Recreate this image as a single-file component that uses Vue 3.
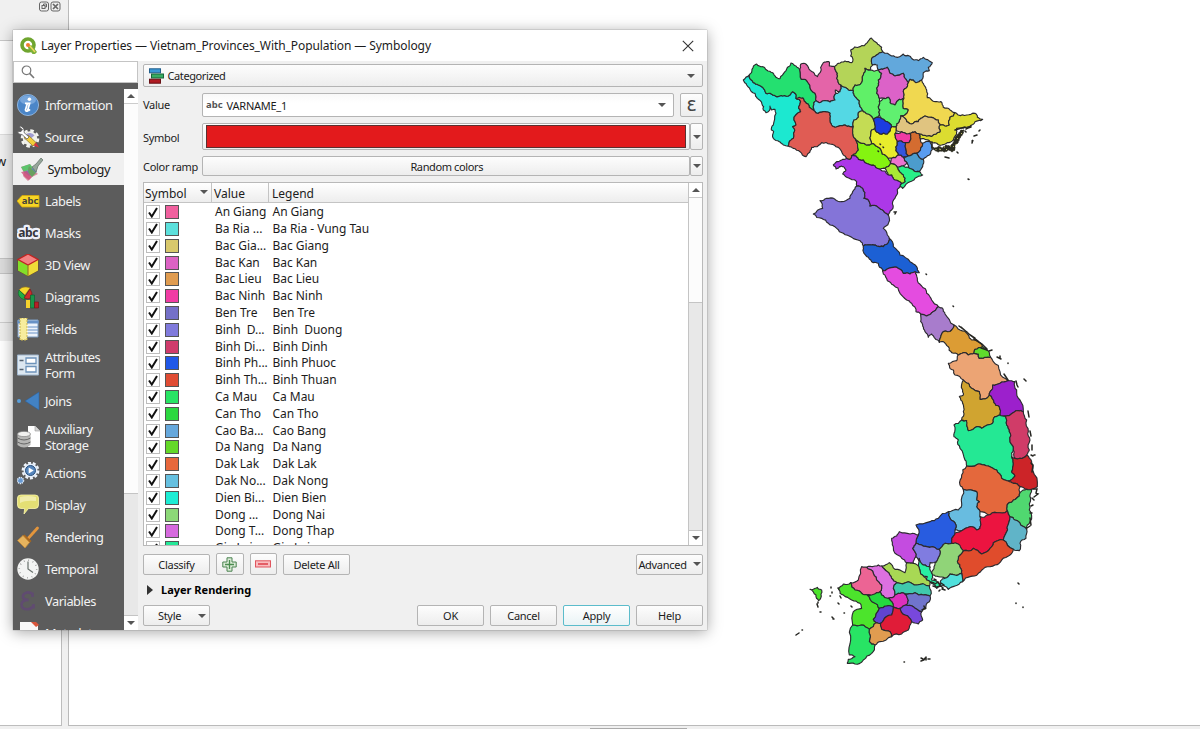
<script setup>
const icons = {
  info: '<circle cx="11" cy="11" r="10.6" fill="#4b86c8" stroke="#9cc0e8" stroke-width=".8"/><ellipse cx="11" cy="6" rx="8" ry="4.6" fill="#8ab4e2" opacity=".7"/><circle cx="12.4" cy="5.2" r="1.8" fill="#fff"/><path d="M8 9.4h4.6l-2 7.2q1 .3 2.4-1.2M8 9.4h2.4l-1.9 6.4q.1 1.7 2.2 1.3" fill="none" stroke="#fff" stroke-width="1.8"/>',
  source: '<circle cx="13" cy="12.500" r="8" fill="none" stroke="#f4f4f0" stroke-width="2.600" stroke-dasharray="3.600 2.683"/><circle cx="13" cy="12.500" r="7.200" fill="#f0f0ea"/><path d="M8.500 8.500a6 6 0 0 1 9 1l-5 4-5 0q-1-2 1-5" fill="#a09cd2"/><path d="M7 11.500l4-2.500 8 7.500-3 3.500z" fill="#f4cf3a" stroke="#8f7a2c" stroke-width=".8"/><path d="M19 16.500l3 5-5.500-2z" fill="#d9333c"/><path d="M.5 5.500q1 3.500 4.500 3L10 13l2-2-5-4.500Q8 2 3.500 0l-1 1L5.500 3.500 4 5.500z" fill="#fff" stroke="#555" stroke-width=".7"/>',
  symbology: '<path d="M1 9l9-3 3 5 5 5-6 3-4 4L3 18l1-3z" fill="#d98ca0"/><path d="M1 9l9-3 3 4-9 4z" fill="#5cc46c"/><path d="M4 14l9-4 4 4-8 4z" fill="#5a86c8"/><path d="M1 14l4 5 4 3 3-3-5-6z" fill="#d0507a" opacity=".8"/><path d="M9 8l7 7-4 4q-6-5-3-11" fill="#68a060"/><path d="M12 9l4-3 5-6 2 2-5 6-2 6z" fill="#96a69a" stroke="#68776f" stroke-width=".8"/>',
  labels: '<path d="M0 11l5-5.500h17v11.500H5z" fill="#f7d525" stroke="#d6a80a" stroke-width=".8"/><text x="13" y="14.300" text-anchor="middle" font-size="9.500" font-weight="700" font-family="Noto Sans,sans-serif" letter-spacing="0" fill="#44443c">abc</text>',
  masks: '<text x="11.200" y="14.800" text-anchor="middle" font-size="12" font-weight="700" font-family="Noto Sans,sans-serif" letter-spacing="-.3" fill="#35353d" stroke="#eef0fa" stroke-width="4.600" stroke-linejoin="round" style="paint-order:stroke">abc</text>',
  cube: '<path d="M11 0l10 5.500v11L11 22 1 16.500v-11z" fill="#f4e02c" stroke="#704818" stroke-width=".8"/><path d="M1 5.500L11 11v11L1 16.500z" fill="#82df2a"/><path d="M11 11l10-5.500v11L11 22z" fill="#efdc38"/><path d="M11 0l10 5.500L11 11 1 5.500z" fill="#f48282" stroke="#c02424" stroke-width="1.300"/><path d="M11 11v11" stroke="#937c24" stroke-width="1.200"/>',
  diagrams: '<path d="M8 9L2 4Q6-1 13 2z" fill="#f6d72c" stroke="#a37b12" stroke-width=".6"/><path d="M8 10L2 4q-3 7 6 10z" fill="#22ad43" stroke="#0b6628" stroke-width=".6"/><path d="M7 12l6-9q5 8-2 10z" fill="#ce2b2d" stroke="#701313" stroke-width=".6"/><path d="M9 14h4.500v8H9z" fill="#f6d22e"/><path d="M13.500 9h4v13h-4z" fill="#18964a" stroke="#0b572c" stroke-width=".6"/><path d="M17.500 16h4v6h-4z" fill="#b51f27" stroke="#701313" stroke-width=".6"/>',
  fields: '<path d="M1 2h20v17H1z" fill="#eef4fc" stroke="#7c9cc0"/><path d="M1 3h20v2H1zM11 9h10M11 12h10M11 15h10" fill="#6992c6" stroke="#6992c6" stroke-width="1.200"/><path d="M3 0h7v22H3z" fill="#f7ed9d" stroke="#c7b34c" stroke-dasharray="2 1"/>',
  form: '<path d="M.5 1h21v20H.5z" fill="#dce7f1" stroke="#9fb5cc"/><path d="M2.500 6.500h4M2.500 15.500h4" stroke="#536270" stroke-width="1.400"/><path d="M9 4h10v5.500H9zM9 12.500h10V18H9z" fill="#fff" stroke="#6d93ba" stroke-width="1.300"/>',
  joins: '<path d="M8 11L22 2v18z" fill="#4282c4" stroke="#285f9c" stroke-width=".5"/><circle cx="2" cy="11" r="2" fill="#5aa0dc"/>',
  storage: '<path d="M11 0h7l5 5v16H11z" fill="#fff"/><path d="M18 0v5h5" fill="#d4d4d4" stroke="#999" stroke-width=".6"/><path d="M.5 8v11q6.500 5 13 0V8z" fill="#b6b6b4"/><path d="M.5 12q6.500 4 13 0M.5 16q6.500 4 13 0" fill="none" stroke="#666" stroke-width="1"/><ellipse cx="7" cy="8" rx="6.500" ry="2.600" fill="#f1f1ef" stroke="#888" stroke-width=".7"/>',
  actions: '<circle cx="13.500" cy="8.500" r="7.700" fill="none" stroke="#eef3fa" stroke-width="2.400" stroke-dasharray="3 1.800"/><circle cx="13.500" cy="8.500" r="7" fill="#e5eef9"/><circle cx="13.500" cy="8.500" r="5" fill="#5686bd" stroke="#294e7b"/><path d="M11.700 5.500l5 3-5 3z" fill="#fff"/><circle cx="3.500" cy="18.500" r="3" fill="#6799d2" stroke="#dce9f7" stroke-width="1.500" stroke-dasharray="1.300 .7"/>',
  display: '<path d="M4 1h14q3.500 0 3.500 3v7q0 3.500-3.500 3.500h-6.500L7 20l.7-5.500H4Q.5 14.500.5 11V4Q.5 1 4 1z" fill="#e4df74" stroke="#fdf8ad" stroke-width=".8"/><path d="M3 3q8-2 16 0v4Q8 6 3 9z" fill="#f1edac"/>',
  rendering: '<path d="M20.500 2l-9 10" stroke="#e3953c" stroke-width="2.800" stroke-linecap="round"/><path d="M7.500 8.500l7 6.500-2 2-7-7z" fill="#a8671f"/><path d="M6 9.500l6.500 7L8 22 .5 14.500z" fill="#e6b35e" stroke="#c68933" stroke-width=".7"/>',
  clock: '<circle cx="11" cy="11" r="10.700" fill="#f3f4f3"/><circle cx="11" cy="11" r="8.700" fill="none" stroke="#999" stroke-width="1.500" stroke-dasharray=".8 3.755"/><path d="M11 3.500V11l5 3.500" fill="none" stroke="#68706c" stroke-width="1.200"/>',
  epsilon: '<path d="M16 4.500Q14 2 10 2.500 4.500 4.300 6.200 8q1.500 2 5.500 2Q5 10 4.500 14.200q-.2 5 6 5Q15 19 16.500 15M15.500 2.500v4.500M16.500 14v4.500" fill="none" stroke="#604b71" stroke-width="2.600"/>',
  metadata: '<path d="M3 0h15l3 3v18H3z" fill="#f8f8f8"/><path d="M14 0l5 5 3-2-3-3z" fill="#d9553b"/>'
}

const nav = [
  { label: 'Information', icon: 'info' },
  { label: 'Source', icon: 'source' },
  { label: 'Symbology', icon: 'symbology', active: true },
  { label: 'Labels', icon: 'labels' },
  { label: 'Masks', icon: 'masks' },
  { label: '3D View', icon: 'cube' },
  { label: 'Diagrams', icon: 'diagrams' },
  { label: 'Fields', icon: 'fields' },
  { label: 'Attributes Form', icon: 'form', tall: true },
  { label: 'Joins', icon: 'joins' },
  { label: 'Auxiliary Storage', icon: 'storage', tall: true },
  { label: 'Actions', icon: 'actions' },
  { label: 'Display', icon: 'display' },
  { label: 'Rendering', icon: 'rendering' },
  { label: 'Temporal', icon: 'clock' },
  { label: 'Variables', icon: 'epsilon' },
  { label: 'Metadata', icon: 'metadata' }
]

const rows = [
  ['#f0609e', 'An Giang', 'An Giang'],
  ['#5ce0dc', 'Ba Ria ...', 'Ba Ria - Vung Tau'],
  ['#d8c86c', 'Bac Gia...', 'Bac Giang'],
  ['#dc62c4', 'Bac Kan', 'Bac Kan'],
  ['#e09c50', 'Bac Lieu', 'Bac Lieu'],
  ['#f03ca4', 'Bac Ninh', 'Bac Ninh'],
  ['#7470c8', 'Ben Tre', 'Ben Tre'],
  ['#807adc', 'Binh  D...', 'Binh  Duong'],
  ['#d03c6c', 'Binh Di...', 'Binh Dinh'],
  ['#2058e8', 'Binh Ph...', 'Binh Phuoc'],
  ['#e04c34', 'Binh Th...', 'Binh Thuan'],
  ['#28e464', 'Ca Mau', 'Ca Mau'],
  ['#2cd840', 'Can Tho', 'Can Tho'],
  ['#66a8dc', 'Cao Ba...', 'Cao Bang'],
  ['#64d828', 'Da Nang', 'Da Nang'],
  ['#e8683c', 'Dak Lak', 'Dak Lak'],
  ['#66c0e0', 'Dak No...', 'Dak Nong'],
  ['#1cecd4', 'Dien Bi...', 'Dien Bien'],
  ['#8cd878', 'Dong ...', 'Dong Nai'],
  ['#d66ade', 'Dong T...', 'Dong Thap'],
  ['#24e898', 'Gia Lai', 'Gia Lai']
]

// Each sheet holds its own origin; province outlines are stored at three units per pixel.
const sheets = [
  { x: 730, y: 30, areas: [
    ['#1ce8d0', '40,150 58,135 70,158 85,165 98,172 108,190 125,193 140,200 158,198 180,195 188,185 197,192 198,205 212,215 206,235 212,245 192,270 198,285 188,290 193,305 190,325 178,335 175,348 160,345 148,335 130,325 131,305 124,300 130,285 138,250 135,238 124,240 120,228 118,242 108,248 100,240 96,222 82,205 75,190 60,178 50,165'],
    ['#24e070', '58,135 66,118 80,102 98,110 110,120 128,128 138,142 150,146 165,125 175,110 183,99 198,108 210,122 214,148 230,152 240,172 255,190 258,212 250,228 252,242 238,232 225,215 206,204 198,192 188,185 180,195 158,198 140,200 125,193 108,190 98,172 85,165 70,158'],
    ['#e464a8', '210,122 212,103 222,100 235,112 250,127 262,140 272,112 280,98 297,95 298,108 314,110 322,130 320,145 332,165 330,185 316,180 312,200 315,210 300,216 285,212 268,218 255,212 258,200 252,188 235,165 232,152 216,148'],
    ['#b4d458', '314,110 325,100 345,93 365,98 368,85 362,78 362,60 390,50 412,38 424,24 440,38 455,52 458,65 445,72 425,85 428,105 420,120 405,115 400,135 395,158 385,165 375,165 370,182 350,175 335,172 332,165 320,145 322,130'],
    ['#54d8e4', '255,212 268,218 285,212 300,216 315,210 318,190 330,185 335,172 350,175 355,180 370,182 372,195 388,212 390,230 398,242 385,248 385,262 372,270 370,290 360,290 345,285 330,287 315,292 305,285 300,268 300,250 285,245 265,250 252,243 250,228'],
    ['#e05c54', '206,204 218,204 225,215 238,232 265,250 285,245 300,250 300,268 305,285 315,292 330,287 345,285 360,290 370,292 368,310 375,325 385,360 378,378 365,378 360,388 340,375 325,352 300,342 275,338 262,350 245,352 235,370 228,380 210,365 190,355 170,350 178,335 190,325 193,305 188,290 198,285 192,270 212,245 206,235 212,215'],
    ['#60f068', '370,182 375,165 385,165 395,158 400,135 405,115 420,120 445,120 455,130 445,150 446,165 440,190 448,205 445,230 450,240 442,262 430,268 412,252 398,242 390,230 388,212 372,195'],
    ['#84f410', '372,328 395,340 410,345 425,340 435,345 450,355 457,372 475,385 482,400 465,415 450,418 435,408 415,402 400,390 382,385 370,378 382,358'],
    ['#c4dc54', '370,290 372,270 385,262 385,248 398,242 412,252 430,268 435,285 425,300 422,315 425,335 410,345 395,340 378,332 368,318']
  ] },
  { x: 860, y: 30, areas: [
    ['#62a8dc', '32,90 48,68 70,63 95,78 105,80 130,72 148,78 158,88 175,92 190,82 207,92 217,98 205,112 208,122 190,128 185,150 168,158 160,150 145,158 138,148 130,130 105,138 90,130 82,112 68,118 55,122 52,105 40,98'],
    ['#dc62c8', '55,122 68,118 82,112 88,130 105,138 130,130 132,145 145,150 142,170 130,185 132,205 118,208 105,225 90,218 85,202 72,205 55,190 50,175 58,165 56,150 66,135'],
    ['#60f070', '58,215 72,205 85,202 90,218 105,225 118,208 128,205 130,235 145,240 138,252 122,258 118,275 108,290 95,290 82,275 70,268 58,255 62,235'],
    ['#f0d850', '130,205 132,185 142,170 145,158 150,148 160,152 168,160 188,150 192,165 200,180 202,203 215,210 230,215 243,215 250,232 270,240 285,248 280,258 270,262 268,285 255,288 240,285 235,270 215,262 195,258 182,265 175,275 155,282 140,272 128,262 138,252 145,240 130,235'],
    ['#dcdc30', '180,325 178,312 200,318 228,312 240,305 240,285 268,285 270,262 285,252 295,255 320,255 345,250 352,262 368,268 355,272 345,275 330,290 318,292 290,295 290,312 280,330 262,338 245,345 225,338 210,335 195,328'],
    ['#e0c480', '108,300 105,290 118,275 122,258 135,265 140,275 155,282 175,275 182,265 195,258 215,262 235,270 242,288 240,305 228,312 200,318 178,312 165,305 150,310 140,312 125,305'],
    ['#e8ec2c', '35,305 45,295 60,312 82,312 90,288 100,292 106,310 112,335 108,350 115,375 95,385 82,385 70,368 55,355 50,338 32,330'],
    ['#1c3ce0', '38,268 55,265 70,268 82,275 90,292 82,312 65,312 50,295 45,280'],
    ['#f03aa4', '108,310 125,305 140,312 152,316 150,332 135,338 115,332 106,322'],
    ['#d46c30', '150,332 152,315 165,305 175,312 180,325 188,340 182,355 170,370 155,375 138,370 135,350 145,338'],
    ['#3454dc', '106,345 115,335 132,338 138,352 135,370 145,378 130,382 112,378 108,362'],
    ['#5a9cf0', '182,355 188,340 205,332 215,345 212,370 200,380 190,388 175,378 170,370'],
    ['#4c9ccc', '138,385 155,375 175,378 190,388 188,410 178,425 160,420 145,412 142,400'],
    ['#ec74d0', '92,388 110,378 130,382 138,395 130,408 112,412 100,402'],
    ['#28f088', '112,412 130,405 145,412 160,422 185,425 188,435 165,445 150,455 128,475 125,460 135,455 130,435 118,425'],
    ['#a8e834', '76,422 90,408 112,415 130,435 135,455 125,460 105,450 95,435']
  ] },
  { x: 800, y: 150, areas: [
    ['#8474d8', '40,192 68,175 60,152 80,145 105,148 125,155 150,145 158,125 170,108 188,115 195,128 192,145 205,150 210,168 235,172 250,182 265,195 268,205 258,228 250,235 262,255 268,265 262,282 240,290 215,285 200,285 180,272 155,262 130,250 110,235 85,220 65,205'],
    ['#ac38e8', '100,45 110,35 125,30 140,25 160,20 175,28 200,40 225,55 245,60 265,75 290,90 305,98 300,110 292,118 290,135 278,155 275,180 272,195 262,192 250,182 235,172 210,165 205,150 192,145 195,125 180,112 165,105 170,95 140,82 128,72 138,60 130,50 118,50 108,57'],
    ['#1c60d4', '190,288 200,283 230,288 250,290 262,282 268,268 280,290 300,315 330,335 350,350 358,368 345,365 330,372 310,370 300,358 280,352 255,362 248,360 235,340 220,338 205,322 190,305'],
    ['#e44ce0', '250,372 262,362 285,352 300,362 310,372 330,372 350,368 352,385 365,408 380,430 395,450 415,470 395,488 380,498 362,492 348,485 335,460 320,450 300,430 280,405 262,392'],
    ['#a87ccc', '362,495 380,498 398,488 412,472 428,475 435,492 462,525 455,540 430,545 422,562 418,577 405,565 395,552 385,562 375,545 368,528 362,515']
  ] },
  { x: 900, y: 300, areas: [
    ['#dc9c34', '125,100 155,95 162,75 180,90 205,105 215,120 240,128 248,140 225,148 222,160 205,165 190,158 175,165 155,158 145,140 130,125 120,125'],
    ['#eca474', '145,190 170,182 175,165 190,160 205,165 222,160 238,175 272,172 280,185 300,215 325,242 300,250 278,255 275,270 268,285 260,295 240,298 238,275 215,265 205,250 190,240 165,225 160,210 150,205'],
    ['#60dc2c', '222,155 230,142 245,145 258,145 268,158 272,170 260,172 238,175 235,162'],
    ['#d0a430', '178,290 190,285 188,270 190,242 205,250 215,265 238,275 240,298 260,295 270,290 282,308 298,320 300,345 285,350 280,365 262,375 245,385 230,380 205,392 200,375 185,360 190,335 188,310'],
    ['#9c20cc', '278,255 300,250 325,243 345,245 350,270 360,300 370,335 355,332 330,345 315,348 300,345 298,320 285,305 270,288'],
    ['#24e894', '162,375 185,362 200,362 205,392 230,380 245,385 262,375 280,365 285,350 315,348 320,375 328,395 330,420 340,440 335,470 340,490 335,515 345,528 325,543 305,535 290,510 265,498 240,492 200,498 195,480 180,445 175,420 162,410 165,390'],
    ['#d03c68', '316,350 335,343 355,333 370,337 380,360 385,395 390,420 388,450 380,465 360,475 345,475 340,450 332,420 325,390'],
    ['#cc2428', '330,475 345,475 360,475 388,462 395,485 398,510 412,560 395,568 360,560 330,545 345,528 335,515 340,490']
  ] },
  { x: 880, y: 460, areas: [
    ['#e4683c', '240,75 245,45 262,20 290,14 330,18 350,32 362,52 380,62 400,70 418,88 418,108 400,120 385,130 382,152 350,158 325,165 300,155 290,140 298,125 290,120 290,95 250,88'],
    ['#50d870', '385,132 400,120 418,108 420,98 440,88 462,85 452,115 448,150 450,185 440,208 422,195 405,180 390,170 385,150'],
    ['#68bce0', '205,155 235,150 245,130 248,92 290,95 290,120 298,125 290,140 305,158 310,180 300,205 270,200 245,212 225,210 228,195 210,175'],
    ['#285ce0', '108,195 150,185 175,175 205,155 210,175 228,200 225,220 215,235 215,250 195,250 178,268 150,262 125,255 108,250 115,225'],
    ['#ec1440', '215,230 240,215 265,200 290,210 305,205 302,190 300,170 330,165 382,152 385,170 382,200 380,215 370,240 340,248 330,265 305,282 280,265 250,272 232,262 212,250'],
    ['#60b4c8', '385,165 405,182 422,198 445,212 438,235 420,250 418,272 400,268 370,240 382,215'],
    ['#e04c2c', '245,270 280,265 305,282 330,265 340,248 372,245 400,268 390,285 365,300 345,315 315,322 295,340 270,350 248,365 245,340 232,305 235,290'],
    ['#90d478', '180,275 195,255 215,247 235,252 245,275 232,295 242,325 245,340 225,345 210,342 195,355 175,350 155,340 162,320 172,300'],
    ['#50e0dc', '182,362 195,350 210,342 225,345 242,338 245,362 225,378 205,388 180,375'],
    ['#c44ce0', '35,235 50,228 58,215 90,222 110,230 108,250 98,265 108,290 100,310 80,308 65,295 45,280 40,260'],
    ['#807ce0', '98,262 110,250 130,255 150,262 172,270 168,295 150,308 150,322 130,315 115,298'],
    ['#28f0a4', '108,300 118,295 130,315 145,322 150,335 158,345 155,360 180,375 170,385 160,372 150,365 142,350 122,342 118,325']
  ] },
  { x: 780, y: 530, areas: [
    ['#a8d854', '305,108 328,98 345,118 375,128 380,105 405,105 415,120 420,140 440,150 448,168 430,175 410,165 385,155 350,158 335,145 322,125'],
    ['#dc70e0', '260,112 285,108 305,112 322,132 348,158 340,175 345,195 325,205 305,195 305,165 295,155 280,130'],
    ['#ec6494', '212,158 235,150 245,110 258,112 278,130 290,150 305,165 300,185 280,200 262,195 245,190 225,180'],
    ['#40c8ac', '338,180 350,160 385,155 410,165 450,175 450,198 430,195 405,188 375,192 350,195'],
    ['#dc30bc', '325,205 345,195 355,190 375,195 385,212 378,225 360,235 340,230'],
    ['#7074cc', '375,192 405,188 450,200 448,215 435,235 425,245 400,230 385,225 385,212'],
    ['#7848dc', '358,235 375,225 400,225 425,250 428,270 415,282 395,275 375,255'],
    ['#4ce42c', '175,175 190,162 212,165 225,182 245,190 265,198 282,218 298,235 280,268 288,278 268,298 245,285 218,285 220,245 245,235 240,220 215,210 190,195 180,190'],
    ['#24d840', '265,200 290,188 310,200 335,215 340,230 320,228 298,235 280,215'],
    ['#6044d0', '280,270 298,240 320,228 342,235 335,255 310,272 290,278'],
    ['#e01c38', '302,280 335,258 342,235 358,240 375,258 392,280 385,300 365,312 335,320 330,305 305,298'],
    ['#e09c50', '265,295 285,278 300,280 305,298 332,305 335,322 300,335 285,345 268,335 270,315'],
    ['#28e464', '218,285 245,283 268,298 265,330 285,348 275,370 250,390 225,402 202,400 205,388 225,380 208,375 212,330'],
    ['#4ce42c', '90,178 100,178 112,172 125,180 122,205 116,212 108,195']
  ] }
]

const noise = (a, b, c, d) => {
  const v = Math.sin(a * 12.99 + b * 78.23 + c * 37.72 + d * 9.13) * 43758.55
  return v - Math.floor(v) - 0.5
}

// Corners of neighbouring provinces that nearly meet are merged into one shared corner.
const corners = []
const corner = (x, y, taken) => {
  let best = null
  let near = 9
  for (const c of corners) {
    const gap = Math.hypot(c[0] - x, c[1] - y)
    if (gap < near && !taken.has(c)) {
      near = gap
      best = c
    }
  }
  if (!best) {
    best = [x, y]
    corners.push(best)
  }
  taken.add(best)
  return best
}

const areas = sheets.flatMap((s) => s.areas.map(([fill, text]) => {
  const taken = new Set()
  const pts = text.split(' ').map((t) => {
    const [x, y] = t.split(',').map(Number)
    return corner(x + s.x * 3, y + s.y * 3, taken)
  })
  return { fill, pts, taken }
}))

// A neighbour's corner that lies along an edge becomes part of that edge.
const between = (p, q, taken) => {
  const dx = q[0] - p[0]
  const dy = q[1] - p[1]
  const len2 = dx * dx + dy * dy || 1
  return corners
    .filter((c) => !taken.has(c))
    .map((c) => {
      const t = ((c[0] - p[0]) * dx + (c[1] - p[1]) * dy) / len2
      return { c, t, off: Math.hypot(c[0] - p[0] - t * dx, c[1] - p[1] - t * dy) }
    })
    .filter((e) => e.t > 0.05 && e.t < 0.95 && e.off < 8)
    .sort((a, b) => a.t - b.t)
    .map((e) => e.c)
}

// Breaks an edge into a coastline-like line; both directions of an edge give the same line.
const crinkle = (p, q, depth) => {
  const len = Math.hypot(q[0] - p[0], q[1] - p[1])
  if (!depth || len < 6) return [q]
  const flip = p[0] > q[0] || (p[0] === q[0] && p[1] > q[1])
  const [a, b] = flip ? [q, p] : [p, q]
  const k = noise(a[0], a[1], b[0], b[1]) * 0.34
  const m = [
    (a[0] + b[0]) / 2 - (b[1] - a[1]) * k,
    (a[1] + b[1]) / 2 + (b[0] - a[0]) * k
  ]
  return [...crinkle(p, m, depth - 1), ...crinkle(m, q, depth - 1)]
}

const provinces = areas.map(({ fill, pts, taken }) => {
  const ring = pts.flatMap((p, i) => [p, ...between(p, pts[(i + 1) % pts.length], taken)])
  const out = ring.flatMap((p, i) => crinkle(p, ring[(i + 1) % ring.length], 2))
  return { fill, d: 'M' + out.map((p) => p[0].toFixed(1) + ' ' + p[1].toFixed(1)).join('L') + 'Z' }
})

const bay = 'M932 147l4 1 3-2 3 2 4-3 4 1 3-3 2-6 3-3 3-4 3 0-1 4-3 4-2 5-3 2 0 5-3 2-3-2-4 2-4-1-3 1-4-2z'
const bayGaps = 'M939 149l2 .5M946 150l1-1M953 147l1-1M957 139l1-1M961 134l1-1M944 147l1 0M950 146l1 0M956 144l0 1M936 150l0-1'
const islands = 'M955 130l10-3M966 129l5-3M932 142l0 6M957 152l1 1M945 157l4 1M974 136l3-1M972 141l1-1-1 3M979 131l1-1M965 131l1 1M968 128l3-1M968 179l1 .5M894 212l2 0-1 2M931 582l3 1M935 584l3-2 2 3M937 587l4-1 2 2M942 589l3 1M933 586l3 1M941 583l3 2M939 591l1-1M934 579l2 1M959 326l8 6M961 327l8 7 6 4M974 339l8 5 5 5M970 335l8 6M981 348l6 2M989 351l3-1M997 357l4 2M1000 356l0 2M1008 363l0 .5M1024 379l2 2M926 274l.5.5M953 306l.5.5M1004 374l4 6M1016 381l1 4 1 2M1028 411l1 6M1030 431l1 5M1032 445l0 5M1031 455l2 1M1034 455l1 0M1031 463l2 2-1 7M1033 489l4 0-1 4 2 1-4 3M1032 498l2 2M1031 506l2-1M1030 513l2 0M1030 518l1 7M1027 528l3-2M1018 583l1 1M1016 603l0 .5M1023 607l0 .5M817 604l1 3M818 602l0 1M820 612l1 0M831 587v1M832 592v1M830 596h.5M838 588l1 1M840 596l1 2M838 603l1 1M851 606l1 1M844 613h.5M832 617l1 1M833 619l1 0M796 635l3-2M802 630h.5M921 658l2 1M921 661l3-1 1-2M926 657l0 3M928 659l2 0M904 662h.5M922 610l4-2M924 606l1 3M880 144l.5.5M883 147l.5.5M878 151l.5.5'
</script>

<template>
  <div class="desktop">
    <div class="workspace">
      <aside class="dock">
        <div class="dock-head"></div>
        <div class="dock-tree"></div>
        <div class="dock-tool"><span>w</span></div>
        <div class="dock-band"></div>
        <div class="dock-sub"></div>
        <div class="dock-sub2"></div>
        <div class="dock-list"></div>
      </aside>
      <div class="splitter"></div>
      <main class="canvas"></main>
    </div>
    <div class="status"><i></i></div>

    <div class="dock-title">
      <svg width="22" height="11" viewBox="0 0 22 11" fill="none" stroke="#666">
        <rect x=".5" y="1" width="9" height="9" rx="2" /><rect x="3" y="4.500" width="3" height="3" /><path d="M4.500 4.500v-1.500h3v3h-1.500" />
        <rect x="12" y="1" width="9" height="9" rx="2" /><path d="M14 3l5 5M19 3l-5 5" stroke-width="1.700" />
      </svg>
    </div>

    <svg class="map" width="1200" height="729" viewBox="0 0 1200 729">
      <g transform="scale(.33333)">
        <path v-for="(s, j) in provinces" :key="j" :d="s.d" :fill="s.fill" stroke="#2b2a2e" stroke-width="3.400" stroke-linejoin="round" />
      </g>
      <path :d="bay" fill="#2c2c20" stroke="#2c2c20" stroke-width=".8" stroke-dasharray="2 1" />
      <path :d="bayGaps" fill="none" stroke="#c8cc70" stroke-width=".9" />
      <path :d="islands" fill="none" stroke="#262622" stroke-width="1.500" stroke-linecap="round" />
    </svg>

    <section class="dialog">
      <header class="title">
        <svg width="17" height="17" viewBox="0 0 17 17">
          <circle cx="8" cy="8" r="6" fill="none" stroke="#6fa52f" stroke-width="3.600" />
          <path d="M8.500 8l3.500.5 5 6.500-2 2h-2.500L8 11z" fill="#7cb03a" />
          <path d="M9 8l6 7" stroke="#f0d85c" stroke-width="1.500" /><circle cx="8" cy="8" r="2" fill="#ee7b30" />
        </svg>
        <h1>Layer Properties — Vietnam_Provinces_With_Population — Symbology</h1>
        <svg class="close" width="12" height="12" viewBox="0 0 12 12" stroke="#333" stroke-width="1.100"><path d="M.8.8l10.400 10.400M11.200.8L.8 11.200" /></svg>
      </header>

      <div class="body">
        <nav class="side">
          <div class="search">
            <svg width="14" height="14" viewBox="0 0 14 14" fill="none" stroke="#777" stroke-width="1.200"><circle cx="5.500" cy="5.300" r="4.300" /><path d="M8.600 8.400l4.400 4.600" stroke-width="1.600" /></svg>
          </div>
          <div class="side-main">
            <div class="items">
              <div v-for="n in nav" :key="n.label" class="item" :class="{ active: n.active, tall: n.tall }">
                <svg width="23" height="23" viewBox="0 0 23 23" v-html="icons[n.icon]"></svg>
                <span>{{ n.label }}</span>
              </div>
            </div>
            <div class="bar side-bar">
              <div class="cap"><b class="up"></b></div>
              <div class="thumb"></div>
              <div class="track"></div>
              <div class="cap end"><b class="down"></b></div>
            </div>
          </div>
        </nav>

        <div class="panel">
          <div class="box renderer">
            <svg width="15" height="16" viewBox="0 0 15 16" stroke-width="1">
              <rect x=".5" y=".8" width="11" height="4" fill="#3998d4" stroke="#225e8c" /><rect x="2.500" y="6" width="12" height="4" fill="#37ac62" stroke="#18643a" /><rect x=".5" y="11.200" width="11" height="4" fill="#b01b22" stroke="#671115" />
            </svg>
            <span>Categorized</span><b class="down"></b>
          </div>
          <div class="line value-line">
            <label>Value</label>
            <div class="box field"><em>abc</em><span>VARNAME_1</span><b class="down"></b></div>
            <div class="box eps">ε</div>
          </div>
          <div class="line symbol-line">
            <label>Symbol</label>
            <div class="box swatch"><i></i></div><div class="box drop"><b class="down"></b></div>
          </div>
          <div class="line ramp-line">
            <label>Color ramp</label>
            <div class="box ramp">Random colors</div><div class="box drop"><b class="down"></b></div>
          </div>

          <div class="table">
            <div class="grid">
              <div class="thead">
                <span class="c1">Symbol<b class="down"></b></span><span class="c2">Value</span><span class="c3">Legend</span>
              </div>
              <div class="rows">
                <div v-for="r in rows" :key="r[2]" class="row">
                  <span class="check"><svg width="10" height="11" viewBox="0 0 10 11" fill="none" stroke="#111" stroke-width="2"><path d="M1 5.500l2.800 4L9 1" /></svg></span>
                  <i :style="{ background: r[0] }"></i>
                  <span class="val">{{ r[1] }}</span><span class="leg">{{ r[2] }}</span>
                </div>
              </div>
            </div>
            <div class="bar table-bar">
              <div class="cap"><b class="up"></b></div>
              <div class="thumb"></div>
              <div class="track"></div>
              <div class="cap"><b class="down"></b></div>
            </div>
          </div>

          <div class="line tools">
            <button class="wide">Classify</button>
            <button class="mini"><svg width="15" height="15" viewBox="0 0 15 15"><path d="M5 .8h5v4.200h4.200v5H10v4.200H5V10H.8V5H5z" fill="#dcecd8" stroke="#4b8350" /><path d="M7.500 3v9M3 7.500h9" stroke="#4c8c50" stroke-width="1.300" /></svg></button>
            <button class="mini"><svg width="16" height="8" viewBox="0 0 16 8"><rect x=".5" y=".8" width="15" height="6.200" fill="#f9bcbf" stroke="#e0555e" /><path d="M3 4h10" stroke="#dc3440" stroke-width="1.400" /></svg></button>
            <button class="wide">Delete All</button>
            <button class="wide adv">Advanced<b class="down"></b></button>
          </div>
          <div class="group"><b class="right"></b><strong>Layer Rendering</strong></div>
          <div class="line foot">
            <button class="wide style">Style<b class="down"></b></button>
            <span class="fill"></span>
            <button class="wide">OK</button>
            <button class="wide">Cancel</button>
            <button class="wide default">Apply</button>
            <button class="wide">Help</button>
          </div>
        </div>
      </div>
    </section>
  </div>
</template>

<style>
html, body { margin: 0; overflow: hidden; }
</style>

<style scoped>
* { box-sizing: border-box; }
.desktop { position: relative; width: 1200px; height: 729px; display: flex; flex-direction: column; background: #f0f0f0; font: 11px/1 "Noto Sans", sans-serif; color: #1c1c1c; overflow: hidden; }
.workspace { flex: 1; display: flex; min-height: 0; }
.dock { width: 62px; display: flex; flex-direction: column; border-right: 1px solid #bdbdbd; border-bottom: 1px solid #bdbdbd; background: #fff; }
.dock-head { height: 41px; background: #f0f0f0; border-bottom: 1px solid #c8c8c8; margin-right: -7px; }
.dock-tree { height: 93px; }
.dock-tool { height: 124px; background: #f0f0f0; padding-top: 20px; font-size: 13px; border-top: 1px solid #ddd; }
.dock-tool span { display: block; margin-left: -4px; }
.dock-band { height: 16px; background: #dcdcdc; border: solid #c2c2c2; border-width: 1px 0; }
.dock-sub { height: 49px; background: #f1f1f1; border-bottom: 1px solid #ccc; }
.dock-sub2 { height: 18px; background: #eee; }
.dock-list { flex: 1; }
.splitter { width: 6px; background: #f0f0f0; }
.canvas { flex: 1; background: #fff; border-left: 1px solid #bababa; border-bottom: 1px solid #bababa; }
.status { height: 3px; display: flex; align-items: flex-end; padding-left: 590px; }
.status i { width: 97px; height: 1px; background: #aaa; }
.dock-title { position: absolute; left: 39px; top: 1px; }
.map { position: absolute; left: 0; top: 0; }

.dialog { position: absolute; left: 13px; top: 30px; width: 694px; height: 599.500px; display: flex; flex-direction: column; background: #f0f0f0; box-shadow: 0 2px 14px rgba(0, 0, 0, .36), 0 0 1px rgba(0, 0, 0, .5); }
.title { height: 31px; flex: none; display: flex; align-items: center; background: #fff; padding: 0 13px 0 7px; }
.title h1 { margin: 0 0 0 4px; font-size: 12px; font-weight: 400; flex: 1; letter-spacing: -.08px; white-space: nowrap; line-height: 18px; padding-top: 1px; }
.body { flex: 1; display: flex; min-height: 0; }
.side { width: 125px; display: flex; flex-direction: column; background: #5c5c5c; }
.search { height: 22px; flex: none; border: 1px solid #c4c4c4; background: #fff; padding: 3px 7px; margin-bottom: 6px; }
.search svg { display: block; }
.side-main { flex: 1; display: flex; min-height: 0; }
.items { width: 111px; overflow: hidden; }
.item { height: 32px; display: flex; align-items: center; padding-left: 3.500px; color: #f2f2f2; font-size: 12.800px; line-height: 16.500px; letter-spacing: -.45px; }
.item svg { flex: none; margin-right: 5.500px; }
.item.tall { height: 40px; }
.item.tall span { width: 66px; }
.item.active { background: #f0f0f0; color: #1a1a1a; }
.item.active svg { margin: 0 5px 0 3px; }
.bar { width: 14px; display: flex; flex-direction: column; background: #fff; }
.cap { height: 14px; display: flex; align-items: center; justify-content: center; background: #fff; }
.track { flex: 1; background: #e8e8e8; border: 1px solid #c4c4c4; border-width: 1px 0 1px 0; }
.side-bar .thumb { height: 390px; background: #fcfcfc; border-top: 1px solid #ccc; }
.table-bar .thumb { height: 105px; background: #fcfcfc; border-top: 1px solid #ccc; }

b.down, b.up { width: 0; height: 0; border: 4px solid transparent; flex: none; }
b.down { border-top: 4.500px solid #555; border-bottom: 0; }
b.up { border-bottom: 4.500px solid #555; border-top: 0; }
b.right { width: 0; height: 0; border: 5px solid transparent; border-left: 6px solid #333; border-right: 0; }

.panel { flex: 1; display: flex; flex-direction: column; padding: 3px 4px 0 5px; min-width: 0; letter-spacing: -.3px; }
.box, button { border: 1px solid #b4b4b4; border-radius: 2px; background: linear-gradient(#fdfdfd, #ededed); display: flex; align-items: center; justify-content: center; }
.box { flex: none; }
.renderer { height: 23px; justify-content: flex-start; padding: 0 7px 0 5px; }
.renderer span { flex: 1; margin-left: 3.500px; letter-spacing: -.4px; }
.line { display: flex; align-items: center; flex: none; }
label { width: 59px; flex: none; }
.value-line { height: 24px; margin-top: 6px; }
.value-line label { margin-top: -1px; }
.field { width: 472px; height: 24px; justify-content: flex-start; background: linear-gradient(#f8f8f8, #fff 40%); padding: 0 7px 0 3px; letter-spacing: -.25px; }
.field em { font-style: normal; font-weight: 700; color: #555; font-size: 9.500px; margin-right: 4px; letter-spacing: 0; }
.field span { flex: 1; }
.eps { width: 23px; height: 24px; margin-left: 6px; font: 19px/20px "DejaVu Sans", sans-serif; color: #444; padding-bottom: 2px; }
.symbol-line { height: 27px; margin-top: 6px; }
.symbol-line label, .ramp-line label { padding-top: 1px; }
.swatch { width: 488px; height: 27px; padding: 1px 3px; }
.swatch i { flex: 1; height: 100%; background: #e31a1c; border: 1px solid #5a3030; }
.drop { width: 13px; height: 27px; }
.ramp-line { height: 20px; margin-top: 6px; }
.ramp { width: 488px; height: 20px; padding-left: 1.500px; letter-spacing: -.38px; }
.ramp-line .drop { height: 20px; }

.table { height: 364px; flex: none; margin-top: 6px; display: flex; border: 1px solid #b9b9b9; background: #fff; letter-spacing: 0; }
.grid { flex: 1; display: flex; flex-direction: column; overflow: hidden; }
.thead { height: 20px; flex: none; display: flex; align-items: stretch; background: linear-gradient(#fff, #ededed); border-bottom: 1px solid #c4c4c4; font-size: 12px; line-height: 22px; }
.c1 { width: 68px; padding: 0 3px 0 1px; display: flex; justify-content: space-between; border-right: 1px solid #c4c4c4; }
.c1 b { margin-top: 7px; }
.c2 { width: 57px; padding-left: 2px; border-right: 1px solid #c4c4c4; }
.c3 { padding-left: 3px; }
.rows { flex: 1; overflow: hidden; padding-top: .8px; }
.row { height: 16.800px; display: flex; align-items: center; font-size: 12px; padding-left: 2px; white-space: pre; letter-spacing: -.04px; }
.check { width: 14px; height: 14px; border: 1px solid #bdbdbd; display: flex; align-items: center; justify-content: center; }
.row i { width: 14px; height: 14px; border: 1px solid #555; margin-left: 5px; }
.val { width: 57.500px; margin-left: 36px; }
.val, .leg { line-height: 16.800px; padding-top: 1px; }
.table-bar { border-left: 1px solid #c4c4c4; }

button { padding: 0; font: inherit; letter-spacing: inherit; color: inherit; height: 21px; }
.wide { width: 67px; }
.mini { width: 27.500px; height: 22px; }
.tools { margin-top: 6.500px; height: 23px; gap: 6px; }
.tools .adv { margin-left: auto; gap: 6px; }
.group { height: 28px; display: flex; align-items: center; padding-left: 4px; flex: none; }
.group strong { margin-left: 8px; font: 700 11px/12px "Noto Sans", sans-serif; letter-spacing: 0; color: #000; }
.foot { height: 24px; gap: 6px; }
.fill { flex: 1; }
.style { padding-left: 11px; gap: 17px; }
.default { border-color: #5bbccb; background: linear-gradient(#fff, #e9f3f5); }
</style>
